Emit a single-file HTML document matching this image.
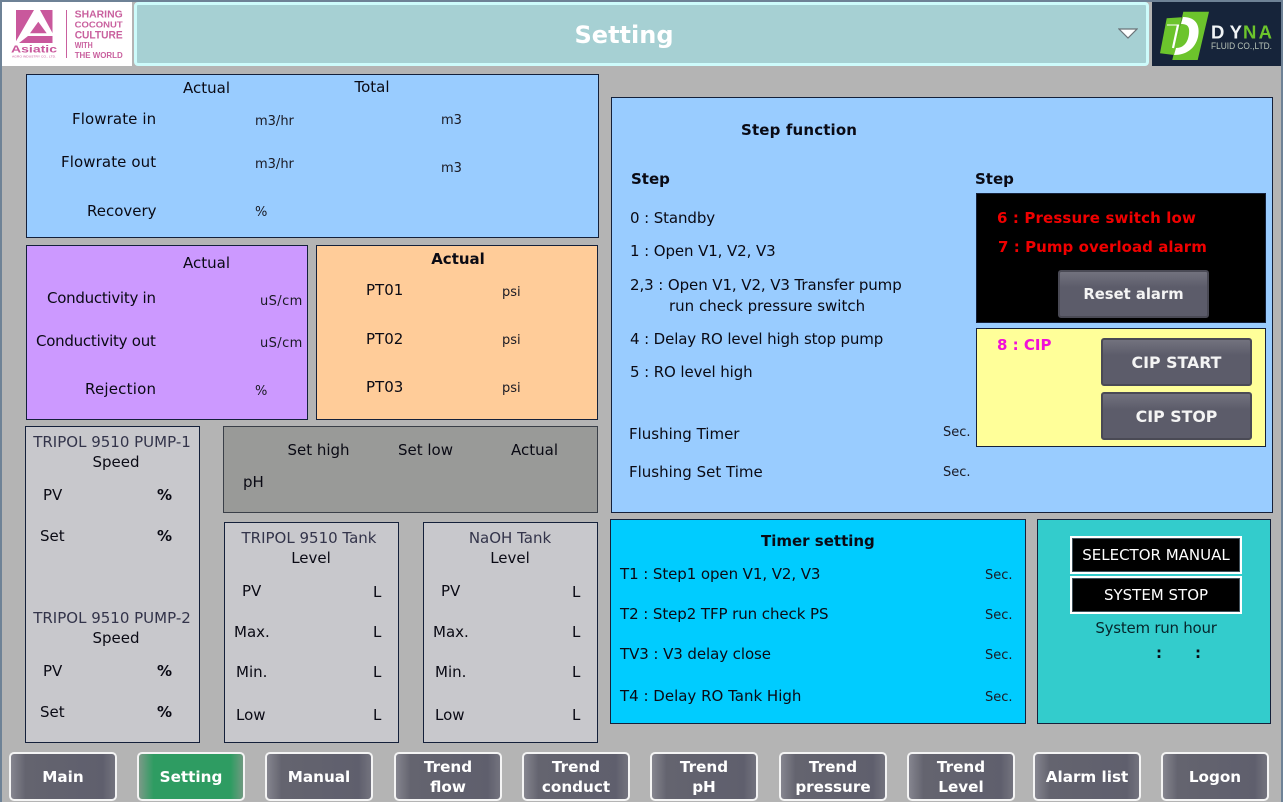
<!DOCTYPE html>
<html><head><meta charset="utf-8"><title>Setting</title>
<style>
html,body{margin:0;padding:0;width:1283px;height:802px;overflow:hidden}
body{position:relative;background:#b4b4b4;font-family:"DejaVu Sans","Liberation Sans",sans-serif;font-size:15px;color:#0a0a14}
.strip{position:absolute;background:#6e8296}
.p{position:absolute;box-sizing:border-box;border:1px solid #14203a}
.t{position:absolute;white-space:nowrap;line-height:20px;height:20px}
.c{transform:translateX(-50%)}
.s{font-size:13px;color:#1a1a24;margin-top:1px}
.b{font-weight:bold}
.g{color:#33344a}
.btn{position:absolute;box-sizing:border-box;top:752px;width:108px;height:49px;border:2px solid #f4f4f4;border-radius:5px;background:linear-gradient(90deg,#85858f 0,#64646f 14%,#5f5f6d 88%,#73737e 100%);color:#fff;font-weight:bold;font-size:15.2px;line-height:20px;text-align:center;display:flex;align-items:center;justify-content:center}
.btn.g2{background:linear-gradient(90deg,#7c9a88 0,#2e9c62 14%,#2e9c62 88%,#6f9a80 100%)}
.btn.two{padding-top:1px}
.gb{position:absolute;box-sizing:border-box;border:2px solid #4a4a55;border-radius:3px;background:linear-gradient(180deg,#72727e 0,#5c5c6a 35%,#5c5c6a 100%);color:#f4f4f4;font-weight:bold;font-size:15.8px;display:flex;align-items:center;justify-content:center}
.sel{position:absolute;box-sizing:border-box;left:1070px;width:172px;height:38px;background:#000;border:2px solid #fff;outline:1px solid #40505a;outline-offset:-3px;color:#fff;font-size:15px;display:flex;align-items:center;justify-content:center}
</style></head><body>
<div class="strip" style="left:0;top:0;width:1283px;height:2px"></div>
<div class="strip" style="left:0;top:0;width:2px;height:802px"></div>
<div class="strip" style="left:1281px;top:0;width:2px;height:802px"></div>

<!-- Asiatic logo -->
<svg style="position:absolute;left:2px;top:2px" width="130" height="64" viewBox="0 0 130 64">
<rect width="130" height="64" fill="#fff"/>
<rect x="14" y="8" width="36.5" height="33" fill="#c9589c"/>
<polygon points="32,8 38,8 51,32 51,34 26,34 17,41 13,41" fill="#fff"/>
<polygon points="36.3,19.7 28,31.3 44.7,31.3" fill="#c9589c"/>
<text x="9" y="50.7" font-family="Liberation Sans" font-weight="bold" font-size="10" fill="#c9589c" textLength="46" lengthAdjust="spacingAndGlyphs">Asiatic</text>
<text x="10" y="55.5" font-family="Liberation Sans" font-size="2.6" fill="#c9589c" textLength="44" lengthAdjust="spacingAndGlyphs">AGRO INDUSTRY CO., LTD.</text>
<rect x="64" y="8" width="1" height="48" fill="#c9609e"/>
<g font-family="Liberation Sans" font-weight="bold" fill="#c9609e">
<text x="72.7" y="15.3" font-size="10" textLength="48" lengthAdjust="spacingAndGlyphs">SHARING</text>
<text x="72.7" y="25.3" font-size="8.7" textLength="48" lengthAdjust="spacingAndGlyphs">COCONUT</text>
<text x="72.7" y="36.7" font-size="11" textLength="48" lengthAdjust="spacingAndGlyphs">CULTURE</text>
<text x="72.7" y="46" font-size="8.5" textLength="18" lengthAdjust="spacingAndGlyphs">WITH</text>
<text x="72.7" y="56" font-size="8.7" textLength="48" lengthAdjust="spacingAndGlyphs">THE WORLD</text>
</g></svg>

<!-- Header -->
<div style="position:absolute;box-sizing:border-box;left:134px;top:2px;width:1015px;height:64px;background:#a6d0d3;border:3px solid #cdfbfb;border-radius:4px"></div>
<div class="t c b" style="left:624px;top:19px;font-size:24px;line-height:32px;height:32px;color:#fff">Setting</div>
<svg style="position:absolute;left:1118px;top:27px" width="20" height="13"><polygon points="1,2 19,2 10,11" fill="#fff" stroke="#6a7378" stroke-width="1.2"/></svg>

<!-- Dyna logo -->
<svg style="position:absolute;left:1152px;top:2px" width="129" height="64" viewBox="0 0 129 64">
<rect width="129" height="64" fill="#16243a"/>
<polygon points="14.7,16.3 29.7,15.3 22,53 8,51.3" fill="#6cc42c"/>
<polygon points="31.3,9.7 57,9.7 45.7,58 20.3,58" fill="#6cc42c"/>
<path d="M31 15 C46 15 48 26 46 35 C43 47 34 53 22 53 L24 46 C32 46 36 40 37 32 C38 24 35 22 29 22 Z" fill="#fff"/>
<path d="M15 23 H27" stroke="#fff" stroke-width="1" fill="none"/>
<path d="M26 23 L21 46" stroke="#fff" stroke-width="2.2" fill="none"/>
<g font-family="Liberation Sans" font-weight="bold" font-size="18.5">
<text x="59" y="36.3" fill="#f0f4f6" textLength="31">DY</text>
<text x="91" y="36.3" fill="#6cc42c" textLength="29">NA</text></g>
<text x="59" y="47" font-family="Liberation Sans" font-size="9" fill="#b8c4b8" textLength="61" lengthAdjust="spacingAndGlyphs">FLUID CO.,LTD.</text>
</svg>

<!-- Flow panel -->
<div class="p" style="left:26px;top:74px;width:573px;height:164px;background:#99ccff"></div>
<div class="t c" style="left:206.5px;top:78px">Actual</div>
<div class="t c" style="left:372px;top:77px">Total</div>
<div class="t" style="left:72px;top:109px;letter-spacing:.1px">Flowrate in</div>
<div class="t" style="left:61px;top:152px;letter-spacing:.1px">Flowrate out</div>
<div class="t" style="left:87px;top:201px">Recovery</div>
<div class="t s" style="left:255px;top:111px">m3/hr</div>
<div class="t s" style="left:255px;top:154px">m3/hr</div>
<div class="t s" style="left:255px;top:202px">%</div>
<div class="t s" style="left:441px;top:110px">m3</div>
<div class="t s" style="left:441px;top:158px">m3</div>

<!-- Conductivity -->
<div class="p" style="left:26px;top:245px;width:282px;height:175px;background:#cc99ff"></div>
<div class="t c" style="left:206.5px;top:253px">Actual</div>
<div class="t" style="left:47px;top:288px;letter-spacing:-.27px">Conductivity in</div>
<div class="t" style="left:36px;top:331px;letter-spacing:-.25px">Conductivity out</div>
<div class="t" style="left:85px;top:379px;letter-spacing:.2px">Rejection</div>
<div class="t s" style="left:260px;top:291px;letter-spacing:.4px">uS/cm</div>
<div class="t s" style="left:260px;top:333px;letter-spacing:.4px">uS/cm</div>
<div class="t s" style="left:255px;top:381px">%</div>

<!-- Pressure -->
<div class="p" style="left:316px;top:245px;width:282px;height:175px;background:#ffcc99"></div>
<div class="t c b" style="left:458px;top:249px">Actual</div>
<div class="t" style="left:366px;top:280px">PT01</div>
<div class="t" style="left:366px;top:329px">PT02</div>
<div class="t" style="left:366px;top:377px">PT03</div>
<div class="t s" style="left:502px;top:282px">psi</div>
<div class="t s" style="left:502px;top:330px">psi</div>
<div class="t s" style="left:502px;top:378px">psi</div>

<!-- Pumps -->
<div class="p" style="left:25px;top:426px;width:175px;height:317px;background:#c8c8cc"></div>
<div class="t c g" style="left:112px;top:432px">TRIPOL 9510 PUMP-1</div>
<div class="t c" style="left:116px;top:452px">Speed</div>
<div class="t" style="left:43px;top:485px">PV</div>
<div class="t b" style="left:157px;top:485px">%</div>
<div class="t" style="left:40px;top:526px">Set</div>
<div class="t b" style="left:157px;top:526px">%</div>
<div class="t c g" style="left:112px;top:608px">TRIPOL 9510 PUMP-2</div>
<div class="t c" style="left:116px;top:628px">Speed</div>
<div class="t" style="left:43px;top:661px">PV</div>
<div class="t b" style="left:157px;top:661px">%</div>
<div class="t" style="left:40px;top:702px">Set</div>
<div class="t b" style="left:157px;top:702px">%</div>

<!-- pH -->
<div class="p" style="left:223px;top:426px;width:375px;height:87px;background:#999a98;border-color:#3a3f48"></div>
<div class="t c" style="left:318.5px;top:440px">Set high</div>
<div class="t c" style="left:425.5px;top:440px">Set low</div>
<div class="t c" style="left:534.5px;top:440px">Actual</div>
<div class="t" style="left:243px;top:472px">pH</div>

<!-- Tanks -->
<div class="p" style="left:224px;top:522px;width:175px;height:221px;background:#c8c8cc"></div>
<div class="t c g" style="left:309px;top:528px">TRIPOL 9510 Tank</div>
<div class="t c" style="left:311px;top:548px">Level</div>
<div class="t" style="left:242px;top:581px">PV</div><div class="t" style="left:373px;top:582px">L</div>
<div class="t" style="left:234px;top:622px">Max.</div><div class="t" style="left:373px;top:622px">L</div>
<div class="t" style="left:236px;top:662px">Min.</div><div class="t" style="left:373px;top:662px">L</div>
<div class="t" style="left:236px;top:705px">Low</div><div class="t" style="left:373px;top:705px">L</div>

<div class="p" style="left:423px;top:522px;width:175px;height:221px;background:#c8c8cc"></div>
<div class="t c g" style="left:510px;top:528px">NaOH Tank</div>
<div class="t c" style="left:510px;top:548px">Level</div>
<div class="t" style="left:441px;top:581px">PV</div><div class="t" style="left:572px;top:582px">L</div>
<div class="t" style="left:433px;top:622px">Max.</div><div class="t" style="left:572px;top:622px">L</div>
<div class="t" style="left:435px;top:662px">Min.</div><div class="t" style="left:572px;top:662px">L</div>
<div class="t" style="left:435px;top:705px">Low</div><div class="t" style="left:572px;top:705px">L</div>

<!-- Step function -->
<div class="p" style="left:611px;top:97px;width:662px;height:416px;background:#99ccff"></div>
<div class="t b" style="left:741px;top:120px;letter-spacing:.15px">Step function</div>
<div class="t b" style="left:631px;top:169px">Step</div>
<div class="t b" style="left:975px;top:169px">Step</div>
<div class="t" style="left:630px;top:208px;letter-spacing:-.1px">0 : Standby</div>
<div class="t" style="left:630px;top:241px;letter-spacing:-.1px">1 : Open V1, V2, V3</div>
<div class="t" style="left:630px;top:275px;letter-spacing:-.09px">2,3 : Open V1, V2, V3 Transfer pump</div>
<div class="t" style="left:669px;top:296px">run check pressure switch</div>
<div class="t" style="left:630px;top:329px;letter-spacing:-.12px">4 : Delay RO level high stop pump</div>
<div class="t" style="left:630px;top:362px;letter-spacing:-.1px">5 : RO level high</div>
<div class="t" style="left:629px;top:424px">Flushing Timer</div>
<div class="t" style="left:629px;top:462px">Flushing Set Time</div>
<div class="t s" style="left:943px;top:422px">Sec.</div>
<div class="t s" style="left:943px;top:462px">Sec.</div>

<div class="p" style="left:976px;top:193px;width:290px;height:130px;background:#000"></div>
<div class="t b" style="left:997px;top:208px;color:#f00000;letter-spacing:.13px">6 : Pressure switch low</div>
<div class="t b" style="left:998px;top:237px;color:#f00000;letter-spacing:.05px">7 : Pump overload alarm</div>
<div class="gb" style="left:1058px;top:270px;width:151px;height:48px;font-size:14.8px">Reset alarm</div>

<div class="p" style="left:976px;top:328px;width:290px;height:119px;background:#ffff99"></div>
<div class="t b" style="left:997px;top:335px;color:#f010d8">8 : CIP</div>
<div class="gb" style="left:1101px;top:338px;width:151px;height:48px">CIP START</div>
<div class="gb" style="left:1101px;top:392px;width:151px;height:48px">CIP STOP</div>

<!-- Timer setting -->
<div class="p" style="left:610px;top:519px;width:416px;height:205px;background:#00ccff"></div>
<div class="t b" style="left:761px;top:531px">Timer setting</div>
<div class="t" style="left:620px;top:564px;letter-spacing:-.08px">T1 : Step1 open V1, V2, V3</div>
<div class="t" style="left:620px;top:604px;letter-spacing:-.08px">T2 : Step2 TFP run check PS</div>
<div class="t" style="left:620px;top:644px;letter-spacing:-.08px">TV3 : V3 delay close</div>
<div class="t" style="left:620px;top:686px">T4 : Delay RO Tank High</div>
<div class="t s" style="left:985px;top:565px">Sec.</div>
<div class="t s" style="left:985px;top:605px">Sec.</div>
<div class="t s" style="left:985px;top:645px">Sec.</div>
<div class="t s" style="left:985px;top:687px">Sec.</div>

<!-- System -->
<div class="p" style="left:1037px;top:519px;width:234px;height:205px;background:#33cccc"></div>
<div class="sel" style="top:536px">SELECTOR MANUAL</div>
<div class="sel" style="top:576px">SYSTEM STOP</div>
<div class="t c" style="left:1156px;top:618px;color:#06262c;letter-spacing:-.25px">System run hour</div>
<div class="t b" style="left:1156px;top:643px">:</div>
<div class="t b" style="left:1195px;top:643px">:</div>

<!-- Nav -->
<div class="btn" style="left:9px">Main</div>
<div class="btn g2" style="left:137px">Setting</div>
<div class="btn" style="left:265px">Manual</div>
<div class="btn two" style="left:394px">Trend<br>flow</div>
<div class="btn two" style="left:522px">Trend<br>conduct</div>
<div class="btn two" style="left:650px">Trend<br>pH</div>
<div class="btn two" style="left:779px">Trend<br>pressure</div>
<div class="btn two" style="left:907px">Trend<br>Level</div>
<div class="btn" style="left:1033px">Alarm list</div>
<div class="btn" style="left:1161px">Logon</div>
</body></html>
